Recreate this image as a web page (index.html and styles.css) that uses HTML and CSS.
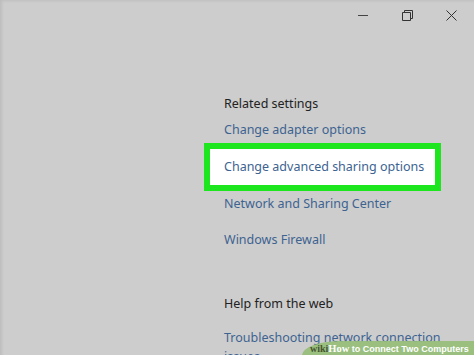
FILE: index.html
```html
<!DOCTYPE html>
<html lang="en">
<head>
  <meta charset="UTF-8" />
  <title>Network settings</title>
  <link rel="stylesheet" href="styles.css">
</head>
<body>
  <div class="window">
    <!-- title bar controls -->
    <div class="titlebar">
      <span class="ctl">
        <svg width="10" height="10" viewBox="0 0 10 10"><path d="M0 5.5h10" stroke="#444" stroke-width="1"/></svg>
      </span>
      <span class="ctl">
        <svg width="11" height="11" viewBox="0 0 11 11"><path d="M2.5 2.5V0.5h8v8h-2M0.5 2.5h8v8h-8z" fill="none" stroke="#333" stroke-width="1"/></svg>
      </span>
      <span class="ctl">
        <svg width="11" height="11" viewBox="0 0 11 11"><path d="M0.5 0.5l10 10M10.5 0.5l-10 10" stroke="#333" stroke-width="1"/></svg>
      </span>
    </div>

    <!-- settings panel -->
    <div class="panel">
      <h2>Related settings</h2>
      <a class="link adapter">Change adapter options</a>
      <div class="highlight">
        <a class="link">Change advanced sharing options</a>
      </div>
      <a class="link network">Network and Sharing Center</a>
      <a class="link">Windows Firewall</a>

      <h2 class="help">Help from the web</h2>
      <a class="link trouble">Troubleshooting network connection<br>issues</a>
    </div>
  </div>

  <div class="watermark">
    <span class="wiki">wiki</span><span class="how">How</span> to Connect Two Computers
  </div>
</body>
</html>
```

FILE: styles.css
```css
body {
  margin: 0;
  width: 474px;
  height: 355px;
  overflow: hidden;
  position: relative;
  background-color: #cdcdcd;
  font-family: 'Noto Sans', 'Open Sans', sans-serif;
}

.window {
  height: 355px;
  overflow: hidden;
  box-shadow: inset 3px 2px 3px -1px rgba(0, 0, 0, 0.08);
}

.titlebar {
  display: flex;
  justify-content: flex-end;
  height: 30px;
  padding-right: 1px;
}

.ctl {
  display: flex;
  align-items: center;
  justify-content: center;
  width: 44px;
  height: 30px;
}

.panel {
  display: flex;
  flex-direction: column;
  align-items: flex-start;
  padding-left: 224px;
  padding-top: 64px;
}

h2 {
  margin: 0;
  font-size: 12.5px;
  font-weight: normal;
  color: #222;
  line-height: 20px;
}

.link {
  display: block;
  font-size: 12.5px;
  line-height: 20px;
  color: #3d6391;
  margin-top: 16px;
}

.adapter {
  margin-top: 6px;
}

.highlight {
  box-sizing: border-box;
  margin: 3px 0 0 -20px;
  width: 237px;
  padding: 8px 0 8px 14px;
  background-color: #fff;
  border: 6px solid #1ee61e;
}

.highlight .link {
  margin-top: 0;
}

.network {
  margin-top: 3px;
}

.help {
  margin-top: 44px;
}

.trouble {
  margin-top: 14px;
  line-height: 19px;
}

.watermark {
  position: absolute;
  right: 0;
  bottom: 0;
  box-sizing: border-box;
  width: 172px;
  height: 14px;
  padding-left: 8px;
  background-color: rgba(150, 190, 120, 0.92);
  border-top-left-radius: 40px 14px;
  color: #fff;
  font-family: 'Liberation Sans', sans-serif;
  font-weight: bold;
  font-size: 9px;
  line-height: 15px;
  white-space: nowrap;
}

.wiki {
  font-family: 'Liberation Serif', serif;
  color: #46552f;
  font-size: 10px;
}

.how {
  font-family: 'Liberation Serif', serif;
  font-size: 10.5px;
}
```
